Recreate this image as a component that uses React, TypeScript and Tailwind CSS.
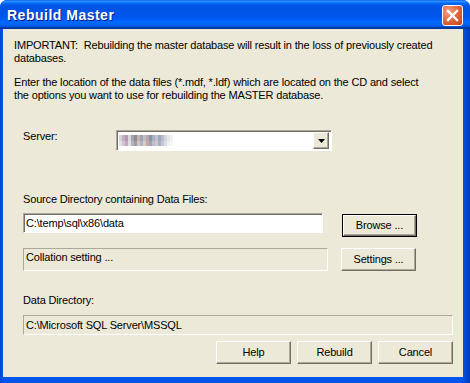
import React from 'react';

// blurred server name, rendered as a little mosaic
const mosaicTop = ['#d9d3dc', '#c4aec2', '#b796b6', '#d8d8dc', '#a4a2ae', '#8c8c98', '#c2b6ae', '#9ea4b6', '#c6bcc0', '#b4a8ae', '#8e94a8', '#a6b0c2', '#c0c4d0', '#9aa8c0', '#b8bcc8', '#d4d6de', '#e6e8ee', '#f2f2f4', '#ffffff'];
const mosaicBottom = ['#e4e0e6', '#d0c4d0', '#c2a8c2', '#e0e0e4', '#b6b2bc', '#9e9ca8', '#d4c6b8', '#b0b4c4', '#d6ccc8', '#c8a898', '#a0a4b8', '#b8c0d0', '#d0c6c4', '#a8b0cc', '#c4c8d4', '#dcdee4', '#eef0f2', '#f8f8fa', '#ffffff'];

const XpButton = ({ label, isDefault = false, className = '' }: { label: string; isDefault?: boolean; className?: string }) => {
  const face = (
    <div className={`flex items-center justify-center bg-[#ece9d8] border border-t-white border-l-white border-r-[#716f64] border-b-[#716f64] shadow-[inset_-1px_-1px_0_#aca899] text-[11px] text-black
      ${isDefault ? 'w-[73px] h-[21px]' : 'w-[75px] h-[23px]'}`}>
      {label}
    </div>
  );
  if (isDefault) {
    return <div className={`border border-black w-[75px] h-[23px] ${className}`}>{face}</div>;
  }
  return <div className={className}>{face}</div>;
};

export default function App() {
  return (
    <div className="w-[470px] h-[383px] flex flex-col rounded-t-[7px] overflow-hidden bg-[#0a4ee4]"
      style={{ fontFamily: '"Liberation Sans", Arial, sans-serif' }}>

      {/* TITLE BAR */}
      <div className="h-[29px] shrink-0 flex items-center justify-between pl-[7px] pr-[7px] bg-[linear-gradient(to_bottom,#0058ee_0%,#3593ff_4%,#288eff_6%,#127dff_8%,#036ffc_10%,#0262ee_14%,#0057e5_20%,#0054e3_24%,#0055eb_56%,#005bf5_66%,#026afe_76%,#0062ef_86%,#0052d6_92%,#0040ab_94%,#003092_100%)]">
        <span className="text-white font-bold text-[14px] tracking-[0.5px] pt-[2px] [text-shadow:1px_1px_0_#0a1883]">Rebuild Master</span>
        <div className="w-[21px] h-[21px] mt-[2px] rounded-[3px] border border-white flex items-center justify-center bg-[radial-gradient(circle_at_30%_30%,#f2a47f_0%,#e16b3f_45%,#c4431a_100%)]">
          <svg width="13" height="13" viewBox="0 0 13 13">
            <path d="M2 2 L11 11 M11 2 L2 11" stroke="white" strokeWidth="2.4" strokeLinecap="square" />
          </svg>
        </div>
      </div>

      {/* FRAME */}
      <div className="flex-1 flex pl-[3px] pr-[7px] pb-[6px] bg-[linear-gradient(to_right,#0846d8,#0055ea_3px,#0055ea_calc(100%-8px),#003bb8)]">
        <div className="flex-1 bg-[#ece9d8] text-[11px] leading-[13px] tracking-[-0.16px] text-black flex flex-col pt-[10px]">

          <div className="pl-[11px] whitespace-nowrap">
            <p>IMPORTANT:&nbsp; Rebuilding the master database will result in the loss of previously created<br />databases.</p>
            <p className="mt-[11px]">Enter the location of the data files (*.mdf, *.ldf) which are located on the CD and select<br />the options you want to use for rebuilding the MASTER database.</p>
          </div>

          <div className="pl-[20px] flex flex-col">
            {/* Server */}
            <div className="flex items-start mt-[28px]">
              <span className="w-[93px]">Server:</span>
              <div className="w-[216px] h-[21px] border border-t-[#aca899] border-l-[#aca899] border-r-white border-b-white shadow-[inset_1px_1px_0_#716f64] bg-white flex items-center justify-between pl-[2px] pr-[2px]">
                <div className="flex flex-col">
                  <div className="flex">
                    {mosaicTop.map((c, i) => <div key={i} className="w-[3px] h-[6px]" style={{ background: c }} />)}
                  </div>
                  <div className="flex">
                    {mosaicBottom.map((c, i) => <div key={i} className="w-[3px] h-[5px]" style={{ background: c }} />)}
                  </div>
                </div>
                <div className="w-[16px] h-[17px] bg-[#ece9d8] border border-t-white border-l-white border-r-[#716f64] border-b-[#716f64] shadow-[inset_-1px_-1px_0_#aca899] flex items-center justify-center">
                  <svg width="7" height="4" viewBox="0 0 7 4">
                    <path d="M0 0 H7 L3.5 4 Z" fill="black" />
                  </svg>
                </div>
              </div>
            </div>

            {/* Source directory */}
            <span className="mt-[42px]">Source Directory containing Data Files:</span>
            <div className="flex items-start mt-[7px]">
              <div className="w-[300px] h-[20px] border border-t-[#aca899] border-l-[#aca899] border-r-white border-b-white shadow-[inset_1px_1px_0_#716f64] bg-white flex items-center pl-[2px]">
                C:\temp\sql\x86\data
              </div>
              <XpButton label="Browse ..." isDefault className="ml-[19px] mt-[1px]" />
            </div>

            {/* Collation */}
            <div className="flex items-start mt-[11px]">
              <div className="w-[305px] h-[23px] border border-t-[#aca899] border-l-[#aca899] border-r-white border-b-white pl-[2px] pt-[2px]">
                Collation setting ...
              </div>
              <XpButton label="Settings ..." className="ml-[13px]" />
            </div>

            {/* Data directory */}
            <span className="mt-[23px]">Data Directory:</span>
            <div className="w-[430px] h-[20px] mt-[8px] border border-t-[#aca899] border-l-[#aca899] border-r-white border-b-white flex items-center pl-[2px]">
              C:\Microsoft SQL Server\MSSQL
            </div>

            {/* Actions */}
            <div className="w-[430px] flex justify-end gap-[6px] mt-[6px]">
              <XpButton label="Help" />
              <XpButton label="Rebuild" />
              <XpButton label="Cancel" />
            </div>
          </div>

        </div>
      </div>
    </div>
  );
}
